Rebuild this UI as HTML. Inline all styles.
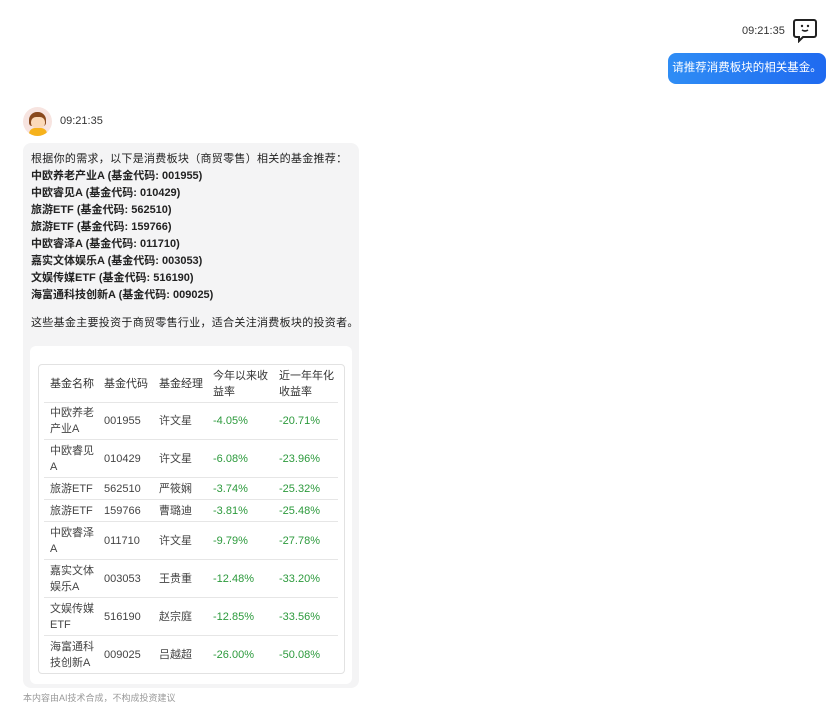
<!DOCTYPE html>
<html><head><meta charset="utf-8"><style>
body{margin:0;width:839px;height:720px;background:#fff;font-family:"Liberation Sans","Noto Sans CJK SC",sans-serif;position:relative;overflow:hidden;color:#222}
.a{position:absolute;white-space:nowrap}
.t{font-size:11px;color:#333}
.bub{position:absolute;left:668px;top:53px;width:158px;height:31px;border-radius:8px;background:linear-gradient(90deg,#2f8df5,#1f6af0);color:#fff;font-size:11.5px;line-height:31px;text-align:center}
.gray{position:absolute;left:23px;top:143px;width:336px;height:545px;background:#f4f4f5;border-radius:8px}
.card{position:absolute;left:30px;top:346px;width:322px;height:338px;background:#fff;border-radius:6px}
.tb{position:absolute;left:38px;top:364px;width:305px;height:308px;border:1px solid #e2e2e2;border-radius:4px}
.ln{font-size:11px;line-height:17px;left:31px;letter-spacing:0.3px}
.b{font-weight:bold;letter-spacing:0}
.row{position:absolute;left:44px;width:294px;border-bottom:1px solid #e6e6e6;font-size:11px;color:#444}
.row span{position:absolute;top:50%;transform:translateY(-50%);line-height:16px}
.g{color:#2c9a3c}
</style></head><body>
<div class="a t" style="left:742px;top:25px">09:21:35</div>
<svg class="a" style="left:792px;top:17px" width="26" height="26" viewBox="0 0 26 26"><path d="M4 3h18a2 2 0 0 1 2 2v13a2 2 0 0 1-2 2H11l-4 4v-4H4a2 2 0 0 1-2-2V5a2 2 0 0 1 2-2z" fill="none" stroke="#222" stroke-width="2"/><circle cx="10" cy="9" r="1.2" fill="#222"/><circle cx="16" cy="9" r="1.2" fill="#222"/><path d="M10 13q3 2 6 0" fill="none" stroke="#222" stroke-width="1.6"/></svg>
<div class="bub">请推荐消费板块的相关基金。</div>
<div class="a" style="left:23px;top:107px;width:29px;height:29px;border-radius:50%;background:#f7e4e0;overflow:hidden">
<div style="position:absolute;left:6px;top:5px;width:17px;height:14px;background:#8a4a1e;border-radius:8px 8px 3px 3px"></div>
<div style="position:absolute;left:8px;top:10px;width:14px;height:11px;background:#fbd9b8;border-radius:5px"></div>
<div style="position:absolute;left:6px;top:21px;width:18px;height:10px;background:#f6b21c;border-radius:6px 6px 0 0"></div></div>
<div class="a t" style="left:60px;top:115px">09:21:35</div>
<div class="gray"></div>
<div class="a ln" style="top:151px">根据你的需求，以下是消费板块（商贸零售）相关的基金推荐：</div>
<div class="a ln b" style="top:168px">中欧养老产业A (基金代码: 001955)</div>
<div class="a ln b" style="top:185px">中欧睿见A (基金代码: 010429)</div>
<div class="a ln b" style="top:202px">旅游ETF (基金代码: 562510)</div>
<div class="a ln b" style="top:219px">旅游ETF (基金代码: 159766)</div>
<div class="a ln b" style="top:236px">中欧睿泽A (基金代码: 011710)</div>
<div class="a ln b" style="top:253px">嘉实文体娱乐A (基金代码: 003053)</div>
<div class="a ln b" style="top:270px">文娱传媒ETF (基金代码: 516190)</div>
<div class="a ln b" style="top:287px">海富通科技创新A (基金代码: 009025)</div>
<div class="a ln" style="top:315px">这些基金主要投资于商贸零售行业，适合关注消费板块的投资者。</div>
<div class="card"></div>
<div class="tb"></div>
<div class="row" style="top:365px;height:37px;color:#333"><span style="left:6px">基金名称</span><span style="left:60px">基金代码</span><span style="left:115px">基金经理</span><span style="left:169px">今年以来收<br>益率</span><span style="left:235px">近一年年化<br>收益率</span></div>
<div class="row" style="top:402px;height:37px"><span style="left:6px">中欧养老<br>产业A</span><span style="left:60px">001955</span><span style="left:115px">许文星</span><span class="g" style="left:169px">-4.05%</span><span class="g" style="left:235px">-20.71%</span></div>
<div class="row" style="top:440px;height:37px"><span style="left:6px">中欧睿见<br>A</span><span style="left:60px">010429</span><span style="left:115px">许文星</span><span class="g" style="left:169px">-6.08%</span><span class="g" style="left:235px">-23.96%</span></div>
<div class="row" style="top:478px;height:21px"><span style="left:6px">旅游ETF</span><span style="left:60px">562510</span><span style="left:115px">严筱娴</span><span class="g" style="left:169px">-3.74%</span><span class="g" style="left:235px">-25.32%</span></div>
<div class="row" style="top:500px;height:21px"><span style="left:6px">旅游ETF</span><span style="left:60px">159766</span><span style="left:115px">曹璐迪</span><span class="g" style="left:169px">-3.81%</span><span class="g" style="left:235px">-25.48%</span></div>
<div class="row" style="top:522px;height:37px"><span style="left:6px">中欧睿泽<br>A</span><span style="left:60px">011710</span><span style="left:115px">许文星</span><span class="g" style="left:169px">-9.79%</span><span class="g" style="left:235px">-27.78%</span></div>
<div class="row" style="top:560px;height:37px"><span style="left:6px">嘉实文体<br>娱乐A</span><span style="left:60px">003053</span><span style="left:115px">王贵重</span><span class="g" style="left:169px">-12.48%</span><span class="g" style="left:235px">-33.20%</span></div>
<div class="row" style="top:598px;height:37px"><span style="left:6px">文娱传媒<br>ETF</span><span style="left:60px">516190</span><span style="left:115px">赵宗庭</span><span class="g" style="left:169px">-12.85%</span><span class="g" style="left:235px">-33.56%</span></div>
<div class="row" style="top:636px;height:37px;border-bottom:none"><span style="left:6px">海富通科<br>技创新A</span><span style="left:60px">009025</span><span style="left:115px">吕越超</span><span class="g" style="left:169px">-26.00%</span><span class="g" style="left:235px">-50.08%</span></div>
<div class="a" style="left:23px;top:691px;font-size:9px;color:#999">本内容由AI技术合成，不构成投资建议</div>
</body></html>
